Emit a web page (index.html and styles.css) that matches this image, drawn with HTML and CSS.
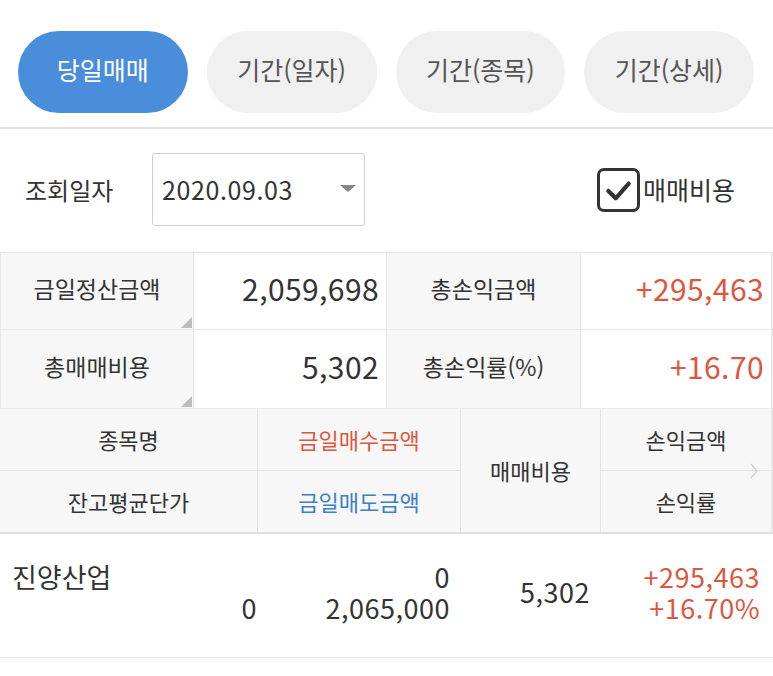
FILE: index.html
```html
<!DOCTYPE html>
<html lang="ko">
<head>
<meta charset="utf-8">
<title>당일매매</title>
<link rel="stylesheet" href="styles.css">
</head>
<body>
<div class="tabs">
  <div class="tab active">당일매매</div>
  <div class="tab">기간(일자)</div>
  <div class="tab">기간(종목)</div>
  <div class="tab">기간(상세)</div>
</div>
<div class="query">
  <div class="q-label">조회일자</div>
  <div class="select">
    <span class="select-text">2020.09.03</span>
    <span class="caret"></span>
  </div>
  <label class="check">
    <span class="box"><svg viewBox="0 0 40 40" width="37" height="38"><path d="M9 21 L17 29 L31 13" fill="none" stroke="#333" stroke-width="4.5" stroke-linecap="round" stroke-linejoin="round"/></svg></span>
    <span class="check-text">매매비용</span>
  </label>
</div>
<div class="summary">
  <div class="s-label corner">금일정산금액</div>
  <div class="s-value">2,059,698</div>
  <div class="s-label">총손익금액</div>
  <div class="s-value red">+295,463</div>
  <div class="s-label corner">총매매비용</div>
  <div class="s-value">5,302</div>
  <div class="s-label">총손익률(%)</div>
  <div class="s-value red">+16.70</div>
</div>
<div class="head">
  <div class="h-cell">종목명</div>
  <div class="h-cell red">금일매수금액</div>
  <div class="h-cell span2">매매비용</div>
  <div class="h-cell">손익금액</div>
  <div class="h-cell">잔고평균단가</div>
  <div class="h-cell blue">금일매도금액</div>
  <div class="h-cell">손익률</div>
  <svg class="chev" viewBox="0 0 8 16" width="8" height="16"><path d="M1 1 L7 8 L1 15" fill="none" stroke="#d0d0d0" stroke-width="1.3"/></svg>
</div>
<div class="row">
  <div class="c1">
    <div class="name">진양산업</div>
    <div class="num">0</div>
  </div>
  <div class="c2">
    <div class="num">0</div>
    <div class="num">2,065,000</div>
  </div>
  <div class="c3">5,302</div>
  <div class="c4 red">
    <div class="num">+295,463</div>
    <div class="num">+16.70%</div>
  </div>
</div>
</body>
</html>
```
FILE: styles.css
```css
* { box-sizing: border-box; }
body {
  margin: 0;
  background: #fff;
  font-family: "Noto Sans CJK KR", "Noto Sans", sans-serif;
  color: #333;
  width: 773px;
}
.red { color: #dc5740; }
.blue { color: #3d7fca; }

.tabs {
  display: flex;
  gap: 19px;
  padding: 31px 19px 14px 18px;
  border-bottom: 2px solid #e4e4e4;
}
.tab {
  width: 170px;
  height: 82px;
  border-radius: 41px;
  background: #f0f0f0;
  color: #555;
  font-size: 25px;
  padding-bottom: 6px;
  display: flex;
  align-items: center;
  justify-content: center;
}
.tab.active {
  background: #4a8ddb;
  color: #fff;
}

.query {
  display: flex;
  align-items: center;
  padding: 24px 38px 0 25px;
  height: 97px;
}
.q-label {
  width: 127px;
  font-size: 24px;
}
.select {
  width: 213px;
  height: 73px;
  border: 1px solid #cfcfcf;
  border-radius: 3px;
  display: flex;
  align-items: center;
  justify-content: space-between;
  padding: 0 8px 2px 9px;
  font-size: 25px;
  letter-spacing: 0.6px;
}
.caret {
  width: 0;
  height: 0;
  border-left: 8px solid transparent;
  border-right: 8px solid transparent;
  border-top: 7px solid #888;
}
.check {
  margin-left: auto;
  display: flex;
  align-items: center;
  gap: 3px;
  font-size: 25px;
}
.check-text { padding-bottom: 2px; }
.box {
  width: 43px;
  height: 44px;
  border: 3px solid #333;
  border-radius: 7px;
  display: flex;
  align-items: center;
  justify-content: center;
}

.summary {
  margin-top: 26px;
  display: grid;
  grid-template-columns: 193px 193px 194px 1fr;
  grid-template-rows: 77px 79px;
  border-top: 1px solid #e2e2e2;
  border-right: 2px solid #e8e8e8;
}
.s-label, .s-value {
  border-bottom: 1px solid #e8e8e8;
  border-left: 1px solid #e8e8e8;
  display: flex;
  align-items: center;
  position: relative;
  padding-bottom: 6px;
}
.s-label {
  background: #f7f7f7;
  justify-content: center;
  font-size: 23px;
}
.s-value {
  justify-content: flex-end;
  padding-right: 7px;
  font-size: 30px;
  letter-spacing: 0.4px;
}
.corner::after {
  content: "";
  position: absolute;
  right: 1px;
  bottom: 1px;
  width: 0;
  height: 0;
  border-left: 11px solid transparent;
  border-bottom: 11px solid #bdbdbd;
}

.head {
  position: relative;
  display: grid;
  grid-template-columns: 257px 203px 140px 1fr;
  grid-template-rows: 62px 61px;
  background: #f7f7f7;
  border-bottom: 2px solid #e0e0e0;
  border-right: 2px solid #e8e8e8;
  font-size: 22px;
}
.h-cell {
  display: flex;
  align-items: center;
  justify-content: center;
  border-left: 1px solid #e4e4e4;
  border-bottom: 1px solid #e4e4e4;
  padding-bottom: 2px;
}
.h-cell:first-child, .h-cell:nth-child(5) { border-left: none; }
.head .h-cell:nth-child(5), .head .h-cell:nth-child(6), .head .h-cell:nth-child(7) { border-bottom: none; }
.span2 {
  grid-row: span 2;
  grid-column: 3;
  border-bottom: none;
}
.chev {
  position: absolute;
  right: 13px;
  top: 54px;
}

.row {
  display: grid;
  grid-template-columns: 257px 193px 140px 170px;
  height: 124px;
  border-bottom: 1px solid #ececec;
  font-size: 27px;
  line-height: 31px;
  letter-spacing: 0.5px;
}
.c1 {
  padding: 27px 0 0 12px;
}
.name { letter-spacing: 0; }
.c1 .num {
  text-align: right;
}
.c2 {
  padding-top: 27px;
  text-align: right;
}
.c3 {
  padding-top: 42px;
  text-align: right;
}
.c4 {
  padding-top: 27px;
  text-align: right;
}
```
